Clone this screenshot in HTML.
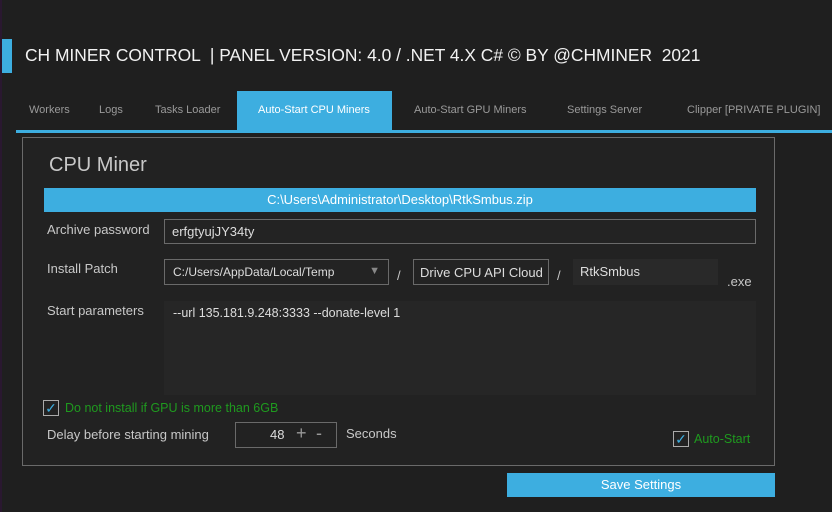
<!DOCTYPE html>
<html><head><meta charset="utf-8"><style>
*{box-sizing:border-box;margin:0;padding:0}
body{width:832px;height:512px;background:#1f1f1f;font-family:"Liberation Sans",sans-serif;color:#ddd;position:relative;overflow:hidden;font-size:13px}
.a{position:absolute}
.lbl{color:#c8c8c8;font-size:13px}
.box{border:1px solid #6a6a6a;background:#232323}
.tab{position:absolute;top:104px;font-size:11px;color:#9a9a9a}
</style></head><body>
<div class="a" style="left:0;top:0;width:2px;height:512px;background:#2a1830"></div>
<div class="a" style="left:2px;top:39px;width:10px;height:34px;background:#3daee0"></div>
<div class="a" style="left:25px;top:45px;font-size:17.4px;color:#f2f2f2;white-space:pre">CH MINER CONTROL  | PANEL VERSION: 4.0 / .NET 4.X C# © BY @CHMINER  2021</div>

<div class="a" style="left:237px;top:91px;width:155px;height:40px;background:#3daee0"></div>
<div class="a" style="left:16px;top:130px;width:816px;height:3px;background:#3daee0"></div>
<div class="tab" style="left:29px">Workers</div>
<div class="tab" style="left:99px">Logs</div>
<div class="tab" style="left:155px">Tasks Loader</div>
<div class="tab" style="left:258px;color:#fff">Auto-Start CPU Miners</div>
<div class="tab" style="left:414px">Auto-Start GPU Miners</div>
<div class="tab" style="left:567px">Settings Server</div>
<div class="tab" style="left:687px">Clipper [PRIVATE PLUGIN]</div>

<div class="a" style="left:22px;top:137px;width:753px;height:329px;border:1px solid #6a6a6a;background:#222"></div>
<div class="a" style="left:49px;top:154px;font-size:20px;color:#c8c8c8">CPU Miner</div>
<div class="a" style="left:44px;top:188px;width:712px;height:24px;background:#3daee0;color:#fff;text-align:center;line-height:24px;font-size:13px">C:\Users\Administrator\Desktop\RtkSmbus.zip</div>

<div class="a lbl" style="left:47px;top:222px">Archive password</div>
<div class="a box" style="left:164px;top:219px;width:592px;height:25px;padding:4px 7px;color:#ddd">erfgtyujJY34ty</div>

<div class="a lbl" style="left:47px;top:261px">Install Patch</div>
<div class="a box" style="left:164px;top:259px;width:225px;height:26px;padding:5px 8px;font-size:12px;color:#ddd">C:/Users/AppData/Local/Temp<span style="position:absolute;right:8px;top:5px;color:#888;font-size:11px">▼</span></div>
<div class="a lbl" style="left:397px;top:268px">/</div>
<div class="a box" style="left:413px;top:259px;width:136px;height:26px;padding:5px 6px;color:#ddd;font-size:13px;white-space:nowrap;overflow:hidden">Drive CPU API Cloud</div>
<div class="a lbl" style="left:557px;top:268px">/</div>
<div class="a" style="left:573px;top:259px;width:145px;height:26px;background:#292929;padding:5px 7px;color:#ddd">RtkSmbus</div>
<div class="a lbl" style="left:727px;top:274px">.exe</div>

<div class="a lbl" style="left:47px;top:303px">Start parameters</div>
<div class="a" style="left:164px;top:301px;width:592px;height:94px;background:#262626;padding:5px 9px;color:#ddd;font-size:12.5px">--url 135.181.9.248:3333 --donate-level 1</div>

<div class="a" style="left:43px;top:400px;width:16px;height:16px;border:1px solid #aaa;color:#3daee0;font-size:14px;line-height:14px;text-align:center">✓</div>
<div class="a" style="left:65px;top:401px;color:#1f9a1f;font-size:12.5px">Do not install if GPU is more than 6GB</div>

<div class="a lbl" style="left:47px;top:427px">Delay before starting mining</div>
<div class="a box" style="left:235px;top:422px;width:102px;height:26px;background:#222"></div>
<div class="a" style="left:270px;top:427px;color:#ddd">48</div>
<div class="a" style="left:296px;top:423px;color:#999;font-size:18px">+</div>
<div class="a" style="left:316px;top:423px;color:#999;font-size:18px">-</div>
<div class="a lbl" style="left:346px;top:426px">Seconds</div>

<div class="a" style="left:673px;top:431px;width:16px;height:16px;border:1px solid #aaa;color:#3daee0;font-size:14px;line-height:14px;text-align:center">✓</div>
<div class="a" style="left:694px;top:432px;color:#1f9a1f;font-size:12.5px">Auto-Start</div>

<div class="a" style="left:507px;top:473px;width:268px;height:24px;background:#3daee0;color:#fff;text-align:center;line-height:24px;font-size:13px">Save Settings</div>
</body></html>
